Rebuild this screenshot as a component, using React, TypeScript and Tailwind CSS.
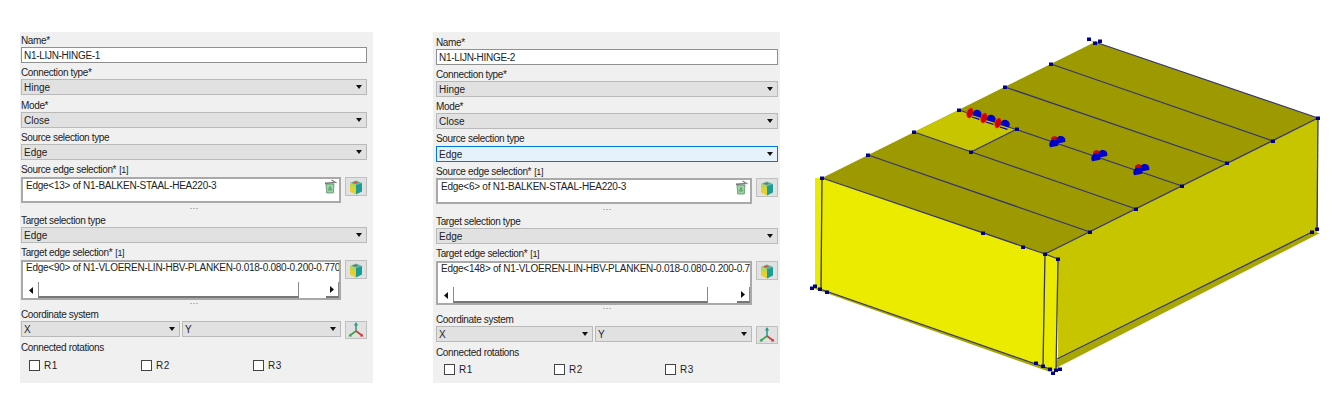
import React from "react";

const FONT = "[font-family:'Liberation_Sans','Noto_Sans',sans-serif]";

function Label({ children, className = "" }: { children: React.ReactNode; className?: string }) {
  return (
    <div className={`flex h-[14px] items-center whitespace-nowrap pt-[2px] text-[10px] leading-none tracking-[-0.35px] text-[#222] ${className}`}>
      {children}
    </div>
  );
}

function Caret() {
  return (
    <svg width="6" height="4" viewBox="0 0 6 4" className="shrink-0">
      <path d="M0 0H6L3 4Z" fill="#111" />
    </svg>
  );
}

function Select({ value, className = "", focus = false }: { value: string; className?: string; focus?: boolean }) {
  return (
    <div
      className={`flex h-[16px] items-center justify-between border pl-[2px] pr-[4px] text-[10px] leading-none text-[#222] ${
        focus ? "border-[#0078d7] bg-[#e5f1fb]" : "border-[#b9b9b9] bg-[#e1e1e1]"
      } ${className}`}
    >
      <span className="pt-[1px]">{value}</span>
      <Caret />
    </div>
  );
}

function Cube() {
  return (
    <svg width="16" height="16" viewBox="0 0 16 16">
      <path d="M2 4L8 1.5L14 4L8 6Z" fill="#4fb8a8" />
      <path d="M4.5 3.6L8 2.5L10 3.6L7 4.8Z" fill="#d8503c" />
      <path d="M2 4L8 6V15.5L2 12.5Z" fill="#e6cf2e" />
      <path d="M2 4L8 6V9L2 7.5Z" fill="#b8d84a" />
      <path d="M8 6L14 4V12.5L8 15.5Z" fill="#1b9c98" />
    </svg>
  );
}

function Axes() {
  return (
    <svg width="18" height="18" viewBox="0 0 18 18">
      <path d="M9 10V2" stroke="#2f9c8c" strokeWidth="1.6" />
      <path d="M6.8 4.5L9 1L11.2 4.5Z" fill="#2f9c8c" />
      <path d="M9 10L15 14.5" stroke="#c83c3c" strokeWidth="1.6" />
      <path d="M13 15.5L16.5 15.5L15 12.5Z" fill="#c83c3c" />
      <path d="M9 10L3 14.5" stroke="#3ca050" strokeWidth="1.6" />
      <path d="M5 15.5L1.5 15.5L3 12.5Z" fill="#3ca050" />
    </svg>
  );
}

function Bin() {
  return (
    <svg width="15" height="15" viewBox="0 0 15 15" className="absolute right-[1px] top-0">
      <path d="M3 5H11L10.3 14H3.7Z" fill="#9bd3a4" stroke="#5f8f6c" strokeWidth="0.8" />
      <path d="M2 4.2L11.5 3.6" stroke="#6f6f6f" strokeWidth="1.4" />
      <path d="M8.5 1L13.5 4" stroke="#7c7c7c" strokeWidth="1.2" />
      <path d="M5.5 11L7 7.5L8.5 11Z" fill="none" stroke="#3f8f55" strokeWidth="0.8" />
    </svg>
  );
}

function ToolButton({ children, className = "" }: { children: React.ReactNode; className?: string }) {
  return (
    <div className={`ml-[4px] flex w-[22px] shrink-0 items-center justify-center border border-[#c0c0c0] bg-[#e1e1e1] ${className}`}>
      {children}
    </div>
  );
}

function Dots({ className }: { className: string }) {
  return (
    <div className={`flex items-center justify-center gap-[1px] ${className}`}>
      <span className="h-[1px] w-[2px] bg-[#b5b5b5]" />
      <span className="h-[1px] w-[2px] bg-[#b5b5b5]" />
      <span className="h-[1px] w-[2px] bg-[#b5b5b5]" />
    </div>
  );
}

function Check({ label, className }: { label: string; className: string }) {
  return (
    <div className={`flex items-center gap-[4px] ${className}`}>
      <span className="h-[11px] w-[11px] border border-[#444] bg-white" />
      <span className="text-[10px] leading-none tracking-[0.6px] text-[#222]">{label}</span>
    </div>
  );
}

function ScrollBar({ thumb, rest }: { thumb: string; rest: string }) {
  return (
    <div className="mt-auto flex h-[16px] items-stretch">
      <div className="flex w-[15px] shrink-0 items-center justify-center">
        <svg width="4" height="7" viewBox="0 0 4 7"><path d="M4 0V7L0 3.5Z" fill="#111" /></svg>
      </div>
      <div className={`border-b-2 border-l border-r border-b-[#777] border-l-[#8a8a8a] border-r-[#8a8a8a] bg-white ${thumb}`} />
      <div className={`bg-white ${rest}`} />
      <div className="flex w-[13px] shrink-0 items-center justify-center border-b-2 border-r border-b-[#777] border-r-[#8a8a8a]">
        <svg width="4" height="7" viewBox="0 0 4 7"><path d="M0 0V7L4 3.5Z" fill="#111" /></svg>
      </div>
    </div>
  );
}

type PanelProps = {
  width: string;
  name: string;
  source: string;
  target: string;
  thumb: string;
  rest: string;
  pad: string;
  contentWidth: string;
  sourceBox: string;
  targetBox: string;
  sourceFocus?: boolean;
  dotsTwo: string;
  rotPad: string;
  checkPositions: [string, string, string];
  gapAfterMode: string;
};

function Panel(p: PanelProps) {
  return (
    <div className={`h-[351px] shrink-0 bg-[#f0f0f0] ${p.width} ${p.pad} ${FONT}`}>
      <div className={p.contentWidth}>
        <Label>Name*</Label>
        <div className="flex h-[16px] items-center border border-[#8f8f8f] bg-white pl-[2px] pt-[1px] text-[10px] leading-none tracking-[-0.3px] text-[#222]">
          {p.name}
        </div>
        <Label className="mt-[2px]">Connection type*</Label>
        <Select value="Hinge" />
        <Label className={p.gapAfterMode}>Mode*</Label>
        <Select value="Close" />
        <Label className="mt-[2px]">Source selection type</Label>
        <Select value="Edge" focus={p.sourceFocus} className={p.sourceFocus ? "mt-[1px]" : ""} />
        <Label className="mt-[2px]">
          Source edge selection* <span className="ml-[3px] text-[9px]">[1]</span>
        </Label>
        <div className={`flex items-start ${p.sourceBox}`}>
          <div className="relative h-full min-w-0 flex-1 border-2 border-[#a9a9a9] bg-white pl-[3px] text-[10px] leading-[13px] tracking-[-0.25px] text-[#222]">
            {p.source}
            <Bin />
          </div>
          <ToolButton className="h-[19px]"><Cube /></ToolButton>
        </div>
        <Dots className="h-[10px]" />
        <Label>Target selection type</Label>
        <Select value="Edge" />
        <Label className="mt-[2px]">
          Target edge selection* <span className="ml-[3px] text-[9px]">[1]</span>
        </Label>
        <div className={`mt-[1px] flex items-start ${p.targetBox}`}>
          <div className="flex h-full min-w-0 flex-1 flex-col border-2 border-[#a9a9a9] bg-white">
            <div className="overflow-hidden whitespace-nowrap pl-[3px] text-[10px] leading-[11px] tracking-[-0.25px] text-[#222]">
              {p.target}
            </div>
            <ScrollBar thumb={p.thumb} rest={p.rest} />
          </div>
          <ToolButton className="h-[19px]"><Cube /></ToolButton>
        </div>
        <Dots className={p.dotsTwo} />
        <Label>Coordinate system</Label>
        <div className="flex items-start">
          <div className="flex min-w-0 flex-1 gap-[2px]">
            <Select value="X" className="flex-1" />
            <Select value="Y" className="flex-1" />
          </div>
          <ToolButton className="h-[18px]"><Axes /></ToolButton>
        </div>
        <Label className="mt-[1px]">Connected rotations</Label>
        <div className={`relative h-[14px] ${p.rotPad}`}>
          <Check label="R1" className={`absolute top-0 ${p.checkPositions[0]}`} />
          <Check label="R2" className={`absolute top-0 ${p.checkPositions[1]}`} />
          <Check label="R3" className={`absolute top-0 ${p.checkPositions[2]}`} />
        </div>
      </div>
    </div>
  );
}

const NODES: [number, number][] = [
  [822, 178], [868, 155], [914, 132], [959, 110], [1005, 87], [1051, 64], [1318, 118],
  [1273, 141], [1227, 163], [1182, 186], [1136, 209], [1090, 232], [1045, 254], [1058, 259],
  [983, 233], [1023, 247], [971, 152], [1017, 129], [1089, 39], [1095, 43], [1100, 41],
  [812, 288], [815, 286], [820, 289], [827, 292], [1036, 363], [1043, 366], [1050, 369],
  [1053, 373], [1056, 370], [1060, 369], [1312, 232], [1317, 229],
];

const LINES: [number, number, number, number][] = [
  [822, 178, 1045, 254], [868, 155, 1090, 232], [914, 132, 1136, 209], [959, 110, 1182, 186],
  [1005, 87, 1227, 163], [1051, 64, 1273, 141], [1095, 42, 1318, 118], [1318, 118, 1045, 254],
  [971, 152, 1017, 129], [822, 178, 821, 289], [1045, 254, 1043, 366], [1058, 259, 1056, 370],
  [1045, 254, 1058, 259], [820, 289, 1050, 369], [1057, 359, 1312, 232], [1318, 118, 1317, 229],
];

function HingeA({ x, y }: { x: number; y: number }) {
  return (
    <g transform={`rotate(18 ${x} ${y})`}>
      <ellipse cx={x} cy={y} rx="3.2" ry="5.2" fill="#d40000" stroke="#e06000" strokeWidth="0.6" />
      <path d={`M${x + 3} ${y + 1}a4.6 4.6 0 1 1 8.4 0z`} fill="#0000cc" />
      <path d={`M${x + 3} ${y + 3.2}h8`} fill="none" stroke="#0000aa" strokeWidth="1.2" />
    </g>
  );
}

function HingeB({ x, y }: { x: number; y: number }) {
  return (
    <g transform={`rotate(-10 ${x} ${y})`}>
      <circle cx={x - 2} cy={y - 2.5} r="3.6" fill="#d40000" />
      <path d={`M${x - 7.5} ${y + 4}a4.6 4.6 0 1 1 8 0z`} fill="#0000cc" />
      <path d={`M${x} ${y + 1.5}a4.6 4.6 0 1 1 8 0z`} fill="#0000cc" />
    </g>
  );
}

function Model() {
  return (
    <svg width="544" height="350" viewBox="800 32 544 350" className="ml-[20px] shrink-0">
      <path d="M1045 254L1318 118V229L1317 233L1058 365V259Z" fill="#c6c500" />
      <path d="M812 288L1050 372L1060 366L1320 233L1312 232L1057 360L1050 368L820 286Z" fill="#a8a600" />
      <path d="M815 178L822 178L1045 254L1058 259L1056 370L1050 369L820 289L815 287Z" fill="#ebeb00" />
      <path d="M822 178L1095 42L1318 118L1045 254Z" fill="#9c9a00" />
      <path d="M959 110L1017 129L971 152L914 132Z" fill="#c6c500" />
      <path d="M1089 39L1095 42L1100 41L1094 44Z" fill="#ebeb00" />
      {LINES.map(([a, b, c, d], i) => (
        <line key={i} x1={a} y1={b} x2={c} y2={d} stroke="#35356f" strokeWidth="1.3" />
      ))}
      {NODES.map(([x, y], i) => (
        <rect key={i} x={x - 2} y={y - 1.5} width="4" height="3.5" fill="#00008b" />
      ))}
      <HingeA x={970} y={113} />
      <HingeA x={984} y={118} />
      <HingeA x={998} y={123} />
      <HingeB x={1057} y={142} />
      <HingeB x={1099} y={156} />
      <HingeB x={1141} y={170} />
    </svg>
  );
}

export default function App() {
  return (
    <div className="flex h-[402px] w-[1344px] items-start overflow-hidden bg-white pl-[20px] pt-[32px]">
      <Panel
        width="w-[353px]"
        pad="pl-[1px] pt-[1px]"
        contentWidth="w-[346px]"
        name="N1-LIJN-HINGE-1"
        source="Edge<13> of N1-BALKEN-STAAL-HEA220-3"
        target="Edge<90> of N1-VLOEREN-LIN-HBV-PLANKEN-0.018-0.080-0.200-0.770"
        thumb="w-[261px]"
        rest="w-[27px]"
        sourceBox="mt-[1px] h-[26px]"
        targetBox="h-[40px]"
        dotsTwo="h-[7px]"
        rotPad="mt-[6px]"
        checkPositions={["left-[8px]", "left-[120px]", "left-[232px]"]}
        gapAfterMode="mt-[3px]"
      />
      <div className="w-[60px] shrink-0" />
      <Panel
        width="w-[347px]"
        pad="pl-[3px] pt-[3px]"
        contentWidth="w-[342px]"
        name="N1-LIJN-HINGE-2"
        source="Edge<6> of N1-BALKEN-STAAL-HEA220-3"
        target="Edge<148> of N1-VLOEREN-LIN-HBV-PLANKEN-0.018-0.080-0.200-0.77"
        thumb="w-[255px]"
        rest="w-[29px]"
        sourceBox="h-[26px]"
        targetBox="h-[44px]"
        sourceFocus
        dotsTwo="h-[7px]"
        rotPad="mt-[5px]"
        checkPositions={["left-[8px]", "left-[118px]", "left-[229px]"]}
        gapAfterMode="mt-[2px]"
      />
      <Model />
    </div>
  );
}
